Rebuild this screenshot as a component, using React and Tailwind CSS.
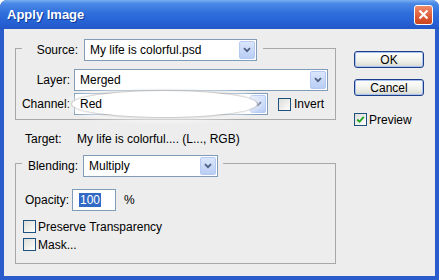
import React from "react";

const font = "font-['Liberation_Sans',Arial,sans-serif]";

function Arrow() {
  return (
    <span className="flex h-full w-[16px] items-center justify-center rounded-[2px] border border-[#b6c9f2] bg-[linear-gradient(180deg,#dbe6fb,#b9cdf5)]">
      <svg width="8" height="6" viewBox="0 0 8 6">
        <path d="M1 1.2 L4 4.2 L7 1.2" fill="none" stroke="#4d6185" strokeWidth="1.8" />
      </svg>
    </span>
  );
}

function Select({ value, className, glow }) {
  return (
    <div
      className={`relative flex h-[22px] items-stretch border border-[#7f9db9] bg-white p-[1px] ${className}`}
    >
      {glow && (
        <span className="absolute left-[-3px] right-[10px] top-[-3px] bottom-[-3px] rounded-[50%] bg-white shadow-[0_0_2px_1px_rgba(120,120,120,0.45),0_0_6px_3px_rgba(255,255,255,0.9)]" />
      )}
      <span className="relative flex-1 pl-[4px] text-[12px] leading-[18px] text-black">
        {value}
      </span>
      <Arrow />
    </div>
  );
}

function Check({ checked }) {
  return (
    <span className="flex h-[13px] w-[13px] items-center justify-center border border-[#1c5180] bg-[linear-gradient(135deg,#dcdcd7,#ffffff)]">
      {checked && (
        <svg width="9" height="9" viewBox="0 0 9 9">
          <path d="M1.2 4.5 L3.5 6.8 L7.8 1.8" fill="none" stroke="#21a121" strokeWidth="1.8" />
        </svg>
      )}
    </span>
  );
}

function Button({ children }) {
  return (
    <button className="flex h-[17px] w-[70px] items-center justify-center rounded-[3px] border border-[#1d3f8a] bg-[linear-gradient(180deg,#ffffff,#f0f0ea_60%,#d8d8d2)] text-[12px] leading-none text-black shadow-[inset_0_0_0_1px_#a9c2ee]">
      {children}
    </button>
  );
}

export default function App() {
  return (
    <div
      className={`flex h-[280px] w-[439px] flex-col overflow-hidden rounded-t-[7px] bg-[#2a5ccc] ${font}`}
    >
      <div className="flex h-[29px] items-center justify-between bg-[linear-gradient(180deg,#7aaff0_0%,#4a89e6_12%,#2f6fdc_45%,#2660d3_80%,#2457c8_100%)] pl-[7px] pr-[6px]">
        <span className="text-[13px] font-bold text-white [text-shadow:1px_1px_0_#0c3a9a]">
          Apply Image
        </span>
        <span className="flex h-[20px] w-[19px] items-center justify-center rounded-[3px] border border-white bg-[linear-gradient(180deg,#ef8b6a,#dc5a36_60%,#c9451f)]">
          <svg width="11" height="11" viewBox="0 0 11 11">
            <path d="M1.5 1.5 L9.5 9.5 M9.5 1.5 L1.5 9.5" stroke="white" strokeWidth="2.2" />
          </svg>
        </span>
      </div>

      <div className="mx-[4px] mb-[4px] flex flex-1 bg-[#ededed] pl-[11px]">
        <div className="flex w-[321px] flex-col pt-[19px]">
          <div className="flex flex-col border border-[#a8a8a8] pb-[4px]">
            <div className="-mt-[10px] ml-[6px] flex w-fit items-center bg-[#ededed] pr-[6px]">
              <span className="w-[56px] text-right text-[12px] text-black">Source:</span>
              <Select value="My life is colorful.psd" className="ml-[6px] w-[173px]" />
            </div>
            <div className="mt-[8px] flex items-center">
              <span className="w-[54px] text-right text-[12px] text-black">Layer:</span>
              <Select value="Merged" className="ml-[4px] w-[254px]" />
            </div>
            <div className="mt-[2px] flex items-center">
              <span className="w-[54px] text-right text-[12px] text-black">Channel:</span>
              <Select value="Red" className="ml-[4px] w-[194px]" glow />
              <span className="ml-[10px]">
                <Check />
              </span>
              <span className="ml-[3px] text-[12px] text-black">Invert</span>
            </div>
          </div>

          <div className="mt-[12px] flex h-[14px] items-center pl-[10px] text-[12px] leading-none text-black">
            <span className="w-[52px]">Target:</span>
            <span>My life is colorful.... (L..., RGB)</span>
          </div>

          <div className="mt-[17px] flex flex-col border border-[#a8a8a8] pb-[12px]">
            <div className="-mt-[9px] ml-[6px] flex w-fit items-center bg-[#ededed] pr-[5px]">
              <span className="w-[56px] text-right text-[12px] text-black">Blending:</span>
              <Select value="Multiply" className="ml-[5px] w-[135px]" />
            </div>
            <div className="mt-[12px] flex items-center pl-[9px]">
              <span className="text-[12px] text-black">Opacity:</span>
              <span className="ml-[3px] flex h-[22px] w-[44px] items-center border border-[#7f9db9] bg-white pl-[6px]">
                <span className="bg-[#316ac5] px-[1px] text-[12px] leading-[14px] text-white">100</span>
              </span>
              <span className="ml-[8px] text-[12px] text-black">%</span>
            </div>
            <div className="mt-[9px] flex items-center pl-[7px]">
              <Check />
              <span className="ml-[2px] text-[12px] leading-none text-black">Preserve Transparency</span>
            </div>
            <div className="mt-[5px] flex items-center pl-[7px]">
              <Check />
              <span className="ml-[2px] text-[12px] leading-none text-black">Mask...</span>
            </div>
          </div>
        </div>

        <div className="ml-[18px] flex flex-col pt-[22px]">
          <Button>OK</Button>
          <div className="mt-[11px]">
            <Button>Cancel</Button>
          </div>
          <div className="mt-[17px] flex items-center">
            <Check checked />
            <span className="ml-[2px] text-[12px] leading-none text-black">Preview</span>
          </div>
        </div>
      </div>
    </div>
  );
}
